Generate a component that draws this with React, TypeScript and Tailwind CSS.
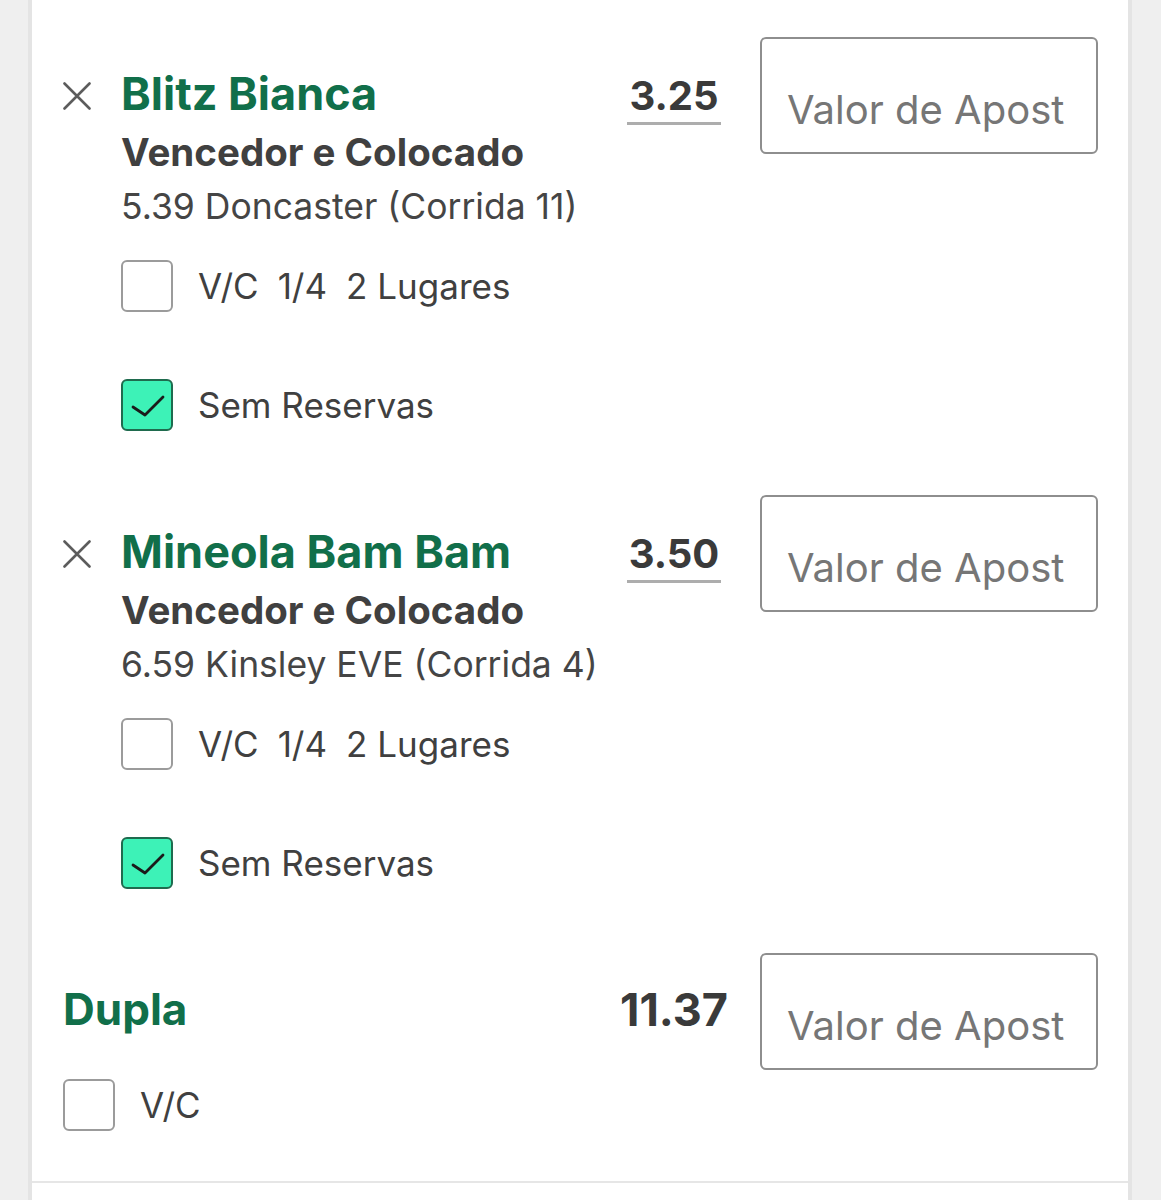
const selections = [
  {
    name: 'Blitz Bianca',
    market: 'Vencedor e Colocado',
    event: '5.39 Doncaster (Corrida 11)',
    odds: '3.25',
  },
  {
    name: 'Mineola Bam Bam',
    market: 'Vencedor e Colocado',
    event: '6.59 Kinsley EVE (Corrida 4)',
    odds: '3.50',
  },
];

function CloseIcon() {
  return (
    <svg width="28" height="28" viewBox="0 0 28 28" className="shrink-0 mt-[45px]">
      <path d="M1.5 1.5L26.5 26.5M26.5 1.5L1.5 26.5" stroke="#5c5c5c" strokeWidth="2.6" strokeLinecap="round" />
    </svg>
  );
}

function Checkbox({ checked }: { checked?: boolean }) {
  if (!checked) {
    return <div className="w-[52px] h-[52px] shrink-0 rounded-[6px] border-2 border-[#9b9b9b] bg-white"></div>;
  }
  return (
    <div className="w-[52px] h-[52px] shrink-0 rounded-[6px] border-2 border-[#1f6b4e] bg-[#3df2b7] flex items-center justify-center">
      <svg width="48" height="48" viewBox="0 0 48 48">
        <path d="M10 26L22 34L40 16" stroke="#1b1b1b" strokeWidth="2.8" fill="none" strokeLinecap="round" strokeLinejoin="round" />
      </svg>
    </div>
  );
}

function StakeInput() {
  return (
    <div className="w-[338px] h-[117px] shrink-0 rounded-[6px] border-2 border-[#8e8e8e] pl-[25px] pt-[51px] overflow-hidden">
      <div className="text-[40px] leading-[40px] text-[#767676] whitespace-nowrap">Valor de Apost</div>
    </div>
  );
}

export default function App() {
  return (
    <div className="min-h-[1200px] bg-[#efefef] font-['Inter',sans-serif]">
      <div className="ml-[28px] w-[1104px] min-h-[1200px] border-x-4 border-[#e4e4e4] bg-white">
        <div className="pt-[37px] pl-[31px] pr-[30px] pb-[49px] border-b-2 border-[#e6e6e6]">
          {selections.map((sel) => (
            <div key={sel.name} className="flex items-start mb-[64px]">
              <CloseIcon />
              <div className="ml-[30px] flex-1 min-w-0 pt-[29px]">
                <div className="text-[45px] leading-[56px] font-bold text-[#116f4a] whitespace-nowrap">{sel.name}</div>
                <div className="mt-[2px] text-[38.5px] leading-[56px] font-bold text-[#404040] whitespace-nowrap">{sel.market}</div>
                <div className="text-[35.5px] leading-[54px] text-[#454545] whitespace-nowrap">{sel.event}</div>

                <div className="mt-[26px] flex items-center gap-[25px]">
                  <Checkbox />
                  <div className="flex gap-[19px] text-[35px] text-[#404040]">
                    <span>V/C</span>
                    <span>1/4</span>
                    <span>2 Lugares</span>
                  </div>
                </div>
                <div className="mt-[66px] flex items-center gap-[25px]">
                  <Checkbox checked />
                  <span className="text-[35px] text-[#404040]">Sem Reservas</span>
                </div>
              </div>
              <div className="w-[172px] shrink-0 text-center pt-[33px]">
                <span className="inline-block px-[2px] text-[40px] leading-[52px] font-bold text-[#3a3a3a] border-b-[3px] border-[#adadad]">
                  {sel.odds}
                </span>
              </div>
              <StakeInput />
            </div>
          ))}

          <div className="flex items-start">
            <div className="flex-1 pt-[28px] text-[44px] leading-[56px] font-bold text-[#116f4a]">Dupla</div>
            <div className="w-[172px] shrink-0 text-center pt-[29px] text-[45px] leading-[56px] font-bold text-[#3a3a3a]">11.37</div>
            <StakeInput />
          </div>
          <div className="mt-[9px] flex items-center gap-[25px]">
            <Checkbox />
            <span className="text-[35px] text-[#404040]">V/C</span>
          </div>
        </div>
      </div>
    </div>
  );
}
